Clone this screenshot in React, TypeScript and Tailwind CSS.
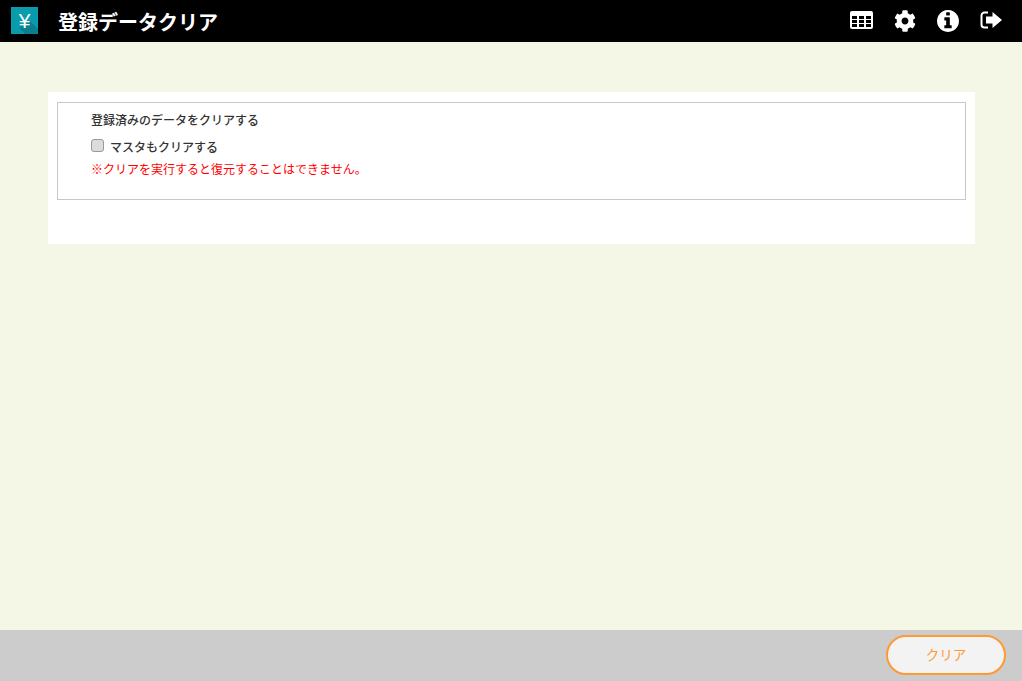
import { FaCog } from "react-icons/fa";

const fontStack = "font-['Noto_Sans_CJK_JP','Liberation_Sans',sans-serif]";

function TableIcon() {
  const cols = [2, 9, 16];
  const rows = [5, 9, 13];
  return (
    <svg width="23" height="18" viewBox="0 0 23 18" className="mt-[-2px]">
      <rect width="23" height="18" rx="2" fill="#fff" />
      {rows.map((y) =>
        cols.map((x) => <rect key={`${x}-${y}`} x={x} y={y} width="5" height="3" fill="#000" />),
      )}
    </svg>
  );
}

function InfoIcon() {
  return (
    <svg width="22" height="22" viewBox="128 128 1536 1536" fill="#fff">
      <path d="M1152 1376v-160q0-14-9-23t-23-9h-96v-512q0-14-9-23t-23-9h-320q-14 0-23 9t-9 23v160q0 14 9 23t23 9h96v320h-96q-14 0-23 9t-9 23v160q0 14 9 23t23 9h448q14 0 23-9t9-23zm-128-896v-160q0-14-9-23t-23-9h-192q-14 0-23 9t-9 23v160q0 14 9 23t23 9h192q14 0 23-9t9-23zm640 416q0 209-103 385.5t-279.5 279.5-385.5 103-385.5-103-279.5-279.5-103-385.5 103-385.5 279.5-279.5 385.5-103 385.5 103 279.5 279.5 103 385.5z" />
    </svg>
  );
}

function SignOutIcon() {
  return (
    <svg width="22" height="18" viewBox="0 0 22 18" fill="none" className="mt-[-2px]">
      <path d="M8 1.500H4.500A3 3 0 0 0 1.500 4.500v9a3 3 0 0 0 3 3H8" stroke="#fff" strokeWidth="2" />
      <path d="M6 5.500h6.500V1L22 9l-9.500 8v-4.500H6z" fill="#fff" />
    </svg>
  );
}

function Logo() {
  return (
    <div className="relative mb-[1px] flex h-[27px] w-[27px] items-center justify-center overflow-hidden bg-[#0a9cad]">
      <svg width="27" height="27" viewBox="0 0 27 27" className="absolute left-0 top-0">
        <path d="M19 14 27 22V27H14L8 21z" fill="#08808f" />
      </svg>
      <span className="relative font-['Liberation_Sans',sans-serif] text-[21px] leading-none text-white">¥</span>
    </div>
  );
}

function Header() {
  return (
    <header className="flex h-[42px] items-center bg-black pl-[11px] pr-[20px]">
      <Logo />
      <h1 className="ml-[20px] mt-[1px] text-[20px] font-bold text-white">登録データクリア</h1>
      <div className="ml-auto flex items-center text-white">
        <TableIcon />
        <FaCog className="ml-[21px] h-[22px] w-[22px]" />
        <div className="ml-[21px]">
          <InfoIcon />
        </div>
        <div className="ml-[21px]">
          <SignOutIcon />
        </div>
      </div>
    </header>
  );
}

export default function App() {
  return (
    <div className={`flex h-[681px] flex-col bg-[#f5f7e6] ${fontStack}`}>
      <Header />
      <main className="flex-1 px-[48px] pt-[50px]">
        <section className="h-[152px] w-[927px] bg-white px-[9px] pt-[10px]">
          <div className="h-[98px] border border-[#c8c8c8] pl-[33px] pt-[8px] text-[12px] leading-[18px] text-[#333]">
            <p className="font-medium">登録済みのデータをクリアする</p>
            <label className="mt-[9px] flex items-center font-medium">
              <span className="mt-[-3px] h-[13px] w-[13px] rounded-[3px] border border-[#999] bg-[#dcdcdc]" />
              <span className="ml-[6px]">マスタもクリアする</span>
            </label>
            <p className="mt-[4px] text-[#ff0000]">※クリアを実行すると復元することはできません。</p>
          </div>
        </section>
      </main>
      <footer className="flex h-[51px] items-start justify-end bg-[#cccccc] pr-[16px] pt-[5px]">
        <button className="h-[40px] w-[120px] rounded-full border-2 border-[#ff9933] bg-[#f3f3f3] pb-[2px] text-[13.500px] text-[#ff9933]">
          クリア
        </button>
      </footer>
    </div>
  );
}
